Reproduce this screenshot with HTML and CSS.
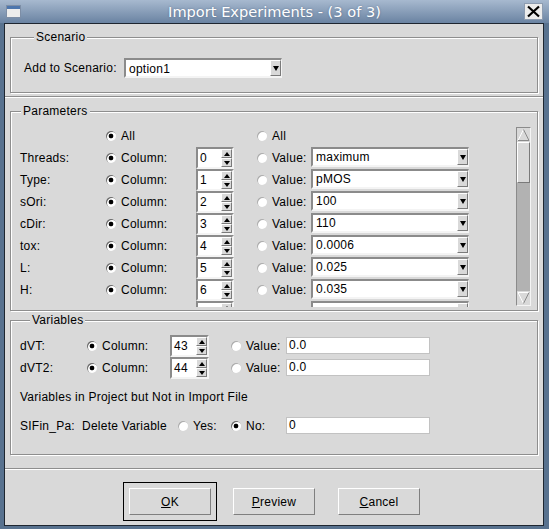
FILE: index.html
```html
<!DOCTYPE html>
<html lang="en">
  <head>
    <meta charset="UTF-8" />
    <meta name="viewport" content="width=device-width, initial-scale=1.0" />
    <title>Import Experiments - (3 of 3)</title>
    <link rel="stylesheet" href="styles.css">
  </head>
  <body>
    <div class="titlebar">
      <svg class="win-icon" width="15" height="13" viewBox="0 0 15 13">
        <rect x="0.5" y="0.5" width="14" height="12" fill="#ececec" stroke="#7d8ea6" />
        <rect x="1" y="1" width="13" height="3" fill="#4d76ad" />
      </svg>
      <span class="title">Import Experiments - (3 of 3)</span>
      <span class="close-btn">
        <svg width="17" height="15" viewBox="0 0 17 15">
          <path d="M3 2.5 L14 12.5 M14 2.5 L3 12.5" stroke="#000" stroke-width="2.2" />
        </svg>
      </span>
    </div>

    <div class="client">
      <!-- Scenario -->
      <div class="section section-scenario">
        <div class="group group-scenario">
          <div class="group-title">Scenario</div>
          <div class="row scn-row">
            <span class="scn-label">Add to Scenario:</span>
            <span class="combo combo-scn"><span class="combo-text">option1</span><span class="combo-btn"></span></span>
          </div>
        </div>
      </div>
      <div class="sep"></div>

      <!-- Parameters -->
      <div class="section section-params">
        <div class="group group-params">
          <div class="group-title">Parameters</div>
          <div class="pview">
            <div class="prows">
              <div class="row">
                <span class="plabel"></span>
                <span class="opt"><i class="radio on"></i>All</span>
                <span class="spin-gap"></span>
                <span class="opt2"><i class="radio"></i>All</span>
              </div>
              <div class="row">
                <span class="plabel">Threads:</span>
                <span class="opt"><i class="radio on"></i>Column:</span>
                <span class="spin"><span class="spin-val">0</span><span class="spin-btns"><i class="up"></i><i class="dn"></i></span></span>
                <span class="opt2"><i class="radio"></i>Value:</span>
                <span class="combo"><span class="combo-text">maximum</span><span class="combo-btn"></span></span>
              </div>
              <div class="row">
                <span class="plabel">Type:</span>
                <span class="opt"><i class="radio on"></i>Column:</span>
                <span class="spin"><span class="spin-val">1</span><span class="spin-btns"><i class="up"></i><i class="dn"></i></span></span>
                <span class="opt2"><i class="radio"></i>Value:</span>
                <span class="combo"><span class="combo-text">pMOS</span><span class="combo-btn"></span></span>
              </div>
              <div class="row">
                <span class="plabel">sOri:</span>
                <span class="opt"><i class="radio on"></i>Column:</span>
                <span class="spin"><span class="spin-val">2</span><span class="spin-btns"><i class="up"></i><i class="dn"></i></span></span>
                <span class="opt2"><i class="radio"></i>Value:</span>
                <span class="combo"><span class="combo-text">100</span><span class="combo-btn"></span></span>
              </div>
              <div class="row">
                <span class="plabel">cDir:</span>
                <span class="opt"><i class="radio on"></i>Column:</span>
                <span class="spin"><span class="spin-val">3</span><span class="spin-btns"><i class="up"></i><i class="dn"></i></span></span>
                <span class="opt2"><i class="radio"></i>Value:</span>
                <span class="combo"><span class="combo-text">110</span><span class="combo-btn"></span></span>
              </div>
              <div class="row">
                <span class="plabel">tox:</span>
                <span class="opt"><i class="radio on"></i>Column:</span>
                <span class="spin"><span class="spin-val">4</span><span class="spin-btns"><i class="up"></i><i class="dn"></i></span></span>
                <span class="opt2"><i class="radio"></i>Value:</span>
                <span class="combo"><span class="combo-text">0.0006</span><span class="combo-btn"></span></span>
              </div>
              <div class="row">
                <span class="plabel">L:</span>
                <span class="opt"><i class="radio on"></i>Column:</span>
                <span class="spin"><span class="spin-val">5</span><span class="spin-btns"><i class="up"></i><i class="dn"></i></span></span>
                <span class="opt2"><i class="radio"></i>Value:</span>
                <span class="combo"><span class="combo-text">0.025</span><span class="combo-btn"></span></span>
              </div>
              <div class="row">
                <span class="plabel">H:</span>
                <span class="opt"><i class="radio on"></i>Column:</span>
                <span class="spin"><span class="spin-val">6</span><span class="spin-btns"><i class="up"></i><i class="dn"></i></span></span>
                <span class="opt2"><i class="radio"></i>Value:</span>
                <span class="combo"><span class="combo-text">0.035</span><span class="combo-btn"></span></span>
              </div>
              <!-- next row, scrolled mostly out of view -->
              <div class="row">
                <span class="plabel"></span>
                <span class="opt"></span>
                <span class="spin"><span class="spin-val"></span><span class="spin-btns"><i class="up"></i><i class="dn"></i></span></span>
                <span class="opt2"></span>
                <span class="combo"><span class="combo-text"></span><span class="combo-btn"></span></span>
              </div>
            </div>
            <div class="vscroll">
              <span class="arrow">
                <svg width="13" height="14" viewBox="0 0 13 14">
                  <path d="M1 12.5 L6.5 1.5" stroke="#fff" fill="none" />
                  <path d="M6.5 1.5 L12 12.5 L1 12.5" stroke="#8a8a8a" fill="none" />
                </svg>
              </span>
              <span class="thumb"></span>
              <span class="track"></span>
              <span class="arrow">
                <svg width="13" height="14" viewBox="0 0 13 14">
                  <path d="M1 1.5 L12 1.5 M1 1.5 L6.5 12.5" stroke="#fff" fill="none" />
                  <path d="M6.5 12.5 L12 1.5" stroke="#8a8a8a" fill="none" />
                </svg>
              </span>
            </div>
          </div>
        </div>
      </div>

      <!-- Variables -->
      <div class="section section-vars">
        <div class="group group-vars">
          <div class="group-title">Variables</div>
          <div class="row vrow-first">
            <span class="vlabel">dVT:</span>
            <span class="vopt"><i class="radio on"></i>Column:</span>
            <span class="spin spin-var"><span class="spin-val">43</span><span class="spin-btns"><i class="up"></i><i class="dn"></i></span></span>
            <span class="vopt2"><i class="radio"></i>Value:</span>
            <span class="field">0.0</span>
          </div>
          <div class="row">
            <span class="vlabel">dVT2:</span>
            <span class="vopt"><i class="radio on"></i>Column:</span>
            <span class="spin spin-var"><span class="spin-val">44</span><span class="spin-btns"><i class="up"></i><i class="dn"></i></span></span>
            <span class="vopt2"><i class="radio"></i>Value:</span>
            <span class="field">0.0</span>
          </div>
          <p class="note">Variables in Project but Not in Import File</p>
          <div class="row del-row">
            <span class="dlabel">SIFin_Pa:</span>
            <span class="dtext">Delete Variable</span>
            <span class="dyes"><i class="radio"></i>Yes:</span>
            <span class="vopt2"><i class="radio on"></i>No:</span>
            <span class="field">0</span>
          </div>
        </div>
      </div>
      <div class="sep"></div>

      <!-- Buttons -->
      <div class="section section-buttons">
        <span class="default-frame"><button class="btn"><u>O</u>K</button></span>
        <button class="btn btn-preview"><u>P</u>review</button>
        <button class="btn btn-cancel"><u>C</u>ancel</button>
      </div>
    </div>
  </body>
</html>
```

FILE: styles.css
```css
* {
  box-sizing: border-box;
  margin: 0;
  padding: 0;
}

body {
  width: 549px;
  height: 529px;
  overflow: hidden;
  background: #58728f;
  font-family: "Liberation Sans", Arial, sans-serif;
  font-size: 12px;
  letter-spacing: 0.25px;
  color: #000;
}

/* Title bar */
.titlebar {
  height: 23px;
  display: grid;
  grid-template-columns: 1fr auto 1fr;
  align-items: center;
  background: linear-gradient(#a7b9cf, #6a83a2);
}

.win-icon {
  display: block;
  margin-left: 6px;
}

.title {
  font-family: "DejaVu Sans", sans-serif;
  font-size: 14.6px;
  letter-spacing: 0;
  line-height: 23px;
  color: #fff;
  text-shadow: 0 0 2px rgba(40, 60, 90, 0.45);
}

.close-btn {
  justify-self: end;
  margin-right: 6px;
  width: 19px;
  height: 17px;
  background: #ececec;
  border: 1px solid #8d9cb0;
}

.close-btn svg {
  display: block;
}

/* Window body */
.client {
  margin: 0 5px 0 4px;
  height: 503px;
  border: 1px solid #1e2630;
  background: #d9d9d9;
}

.sep {
  height: 2px;
  border-top: 1px solid #8e8e8e;
  border-bottom: 1px solid #fff;
}

.section-scenario {
  padding: 13px 5px 3px;
}

.section-params {
  padding: 13px 5px 0;
}

.section-vars {
  padding: 9px 5px 13px;
}

.group {
  border: 1px solid #8e8e8e;
  box-shadow: inset 1px 1px 0 #fff, 1px 1px 0 #fff;
}

.group-title {
  width: fit-content;
  margin: -8px 0 0 10px;
  padding: 0 2px;
  line-height: 14px;
  background: #d9d9d9;
}

.row {
  display: flex;
  align-items: center;
  height: 22px;
  white-space: nowrap;
}

/* Scenario */
.group-scenario {
  padding: 0 0 13px 13px;
}

.scn-row {
  margin-top: 13px;
}

.scn-label {
  width: 100px;
}

.combo-scn {
  width: 159px;
  height: 22px;
}

/* Widgets */
.radio {
  display: block;
  flex: none;
  width: 10px;
  height: 10px;
  margin-right: 5px;
  border-radius: 50%;
  background: #fff;
  box-shadow: inset 1px 1px 0 #ababab;
}

.radio.on {
  background: radial-gradient(circle, #000 0 2px, #fff 2.7px);
  box-shadow: inset 1px 1px 0 #6a6a6a;
}

.combo {
  display: flex;
  flex: none;
  align-self: flex-start;
  width: 158px;
  height: 20px;
  border: 2px solid;
  border-right-width: 1px;
  border-color: #8b8b8b #f4f4f4 #f4f4f4 #8b8b8b;
  background: #fff;
}

.combo-scn {
  align-self: center;
}

.combo-text {
  flex: 1;
  padding-left: 3px;
  line-height: 16px;
}

.combo-scn .combo-text {
  line-height: 18px;
}

.combo-btn {
  width: 11px;
  display: flex;
  align-items: center;
  justify-content: center;
  border: 1px solid;
  border-color: #fff #7a7a7a #7a7a7a #fff;
  background: #d9d9d9;
}

.combo-btn::before {
  content: "";
  border-left: 3.5px solid transparent;
  border-right: 3.5px solid transparent;
  border-top: 5px solid #000;
}

.spin {
  display: flex;
  flex: none;
  width: 38px;
  height: 22px;
  margin-right: 23px;
  border: 2px solid;
  border-color: #8b8b8b #f4f4f4 #f4f4f4 #8b8b8b;
  background: #fff;
}

.spin-val {
  flex: 1;
  padding-left: 2px;
  line-height: 18px;
}

.spin-btns {
  width: 11px;
  display: flex;
  flex-direction: column;
  background: #d9d9d9;
}

.spin-btns i {
  flex: 1;
  display: flex;
  align-items: center;
  justify-content: center;
  border: 1px solid;
  border-color: #fff #7a7a7a #7a7a7a #fff;
}

.spin-btns i::before {
  content: "";
  border-left: 3.5px solid transparent;
  border-right: 3.5px solid transparent;
}

.spin-btns .up::before {
  border-bottom: 4px solid #000;
}

.spin-btns .dn::before {
  border-top: 4px solid #000;
}

.field {
  flex: none;
  align-self: flex-start;
  width: 144px;
  height: 17px;
  margin-top: 2px;
  padding-left: 2px;
  line-height: 15px;
  border: 1px solid #c2c2c2;
  background: #fff;
}

/* Parameters */
.pview {
  display: flex;
  height: 182px;
  margin-top: 7px;
  margin-bottom: 3px;
  overflow: hidden;
}

.prows {
  flex: 1;
  padding-left: 9px;
}

.plabel {
  width: 86px;
  flex: none;
}

.opt {
  display: flex;
  align-items: center;
  width: 90px;
  flex: none;
}

.spin-gap {
  width: 61px;
  flex: none;
}

.opt2 {
  display: flex;
  align-items: center;
  width: 54px;
  flex: none;
}

.vscroll {
  width: 15px;
  margin: 2px 6px 1px 0;
  display: flex;
  flex-direction: column;
  border: 1px solid;
  border-color: #8b8b8b #f4f4f4 #f4f4f4 #8b8b8b;
  background: #b2b2b2;
}

.vscroll .arrow {
  height: 14px;
  background: #d9d9d9;
}

.vscroll .arrow svg {
  display: block;
}

.vscroll .thumb {
  height: 41px;
  background: #d9d9d9;
  border: 1px solid;
  border-color: #fff #7a7a7a #7a7a7a #fff;
}

.vscroll .track {
  flex: 1;
}

/* Variables */
.group-vars {
  padding: 0 0 17px 9px;
}

.vrow-first {
  margin-top: 8px;
}

.vlabel {
  width: 67px;
  flex: none;
}

.vopt {
  display: flex;
  align-items: center;
  width: 83px;
  flex: none;
}

.spin-var {
  width: 39px;
  margin-right: 22px;
}

.vopt2 {
  display: flex;
  align-items: center;
  width: 55px;
  flex: none;
}

.note {
  margin-top: 11px;
  line-height: 14px;
}

.del-row {
  margin-top: 11px;
}

.dlabel {
  width: 62px;
  flex: none;
}

.dtext {
  width: 96px;
  flex: none;
}

.dyes {
  display: flex;
  align-items: center;
  width: 53px;
  flex: none;
}

/* Buttons */
.section-buttons {
  display: flex;
  align-items: flex-start;
  padding: 12px 0 0 118px;
}

.default-frame {
  border: 1px solid #000;
  padding: 5px;
}

.btn {
  display: block;
  width: 82px;
  height: 27px;
  border: 1px solid;
  border-color: #fff #7f7f7f #7f7f7f #fff;
  background: #d9d9d9;
  font: inherit;
  letter-spacing: inherit;
  color: #000;
}

.btn-preview {
  margin: 6px 0 0 16px;
}

.btn-cancel {
  margin: 6px 0 0 23px;
}
```
